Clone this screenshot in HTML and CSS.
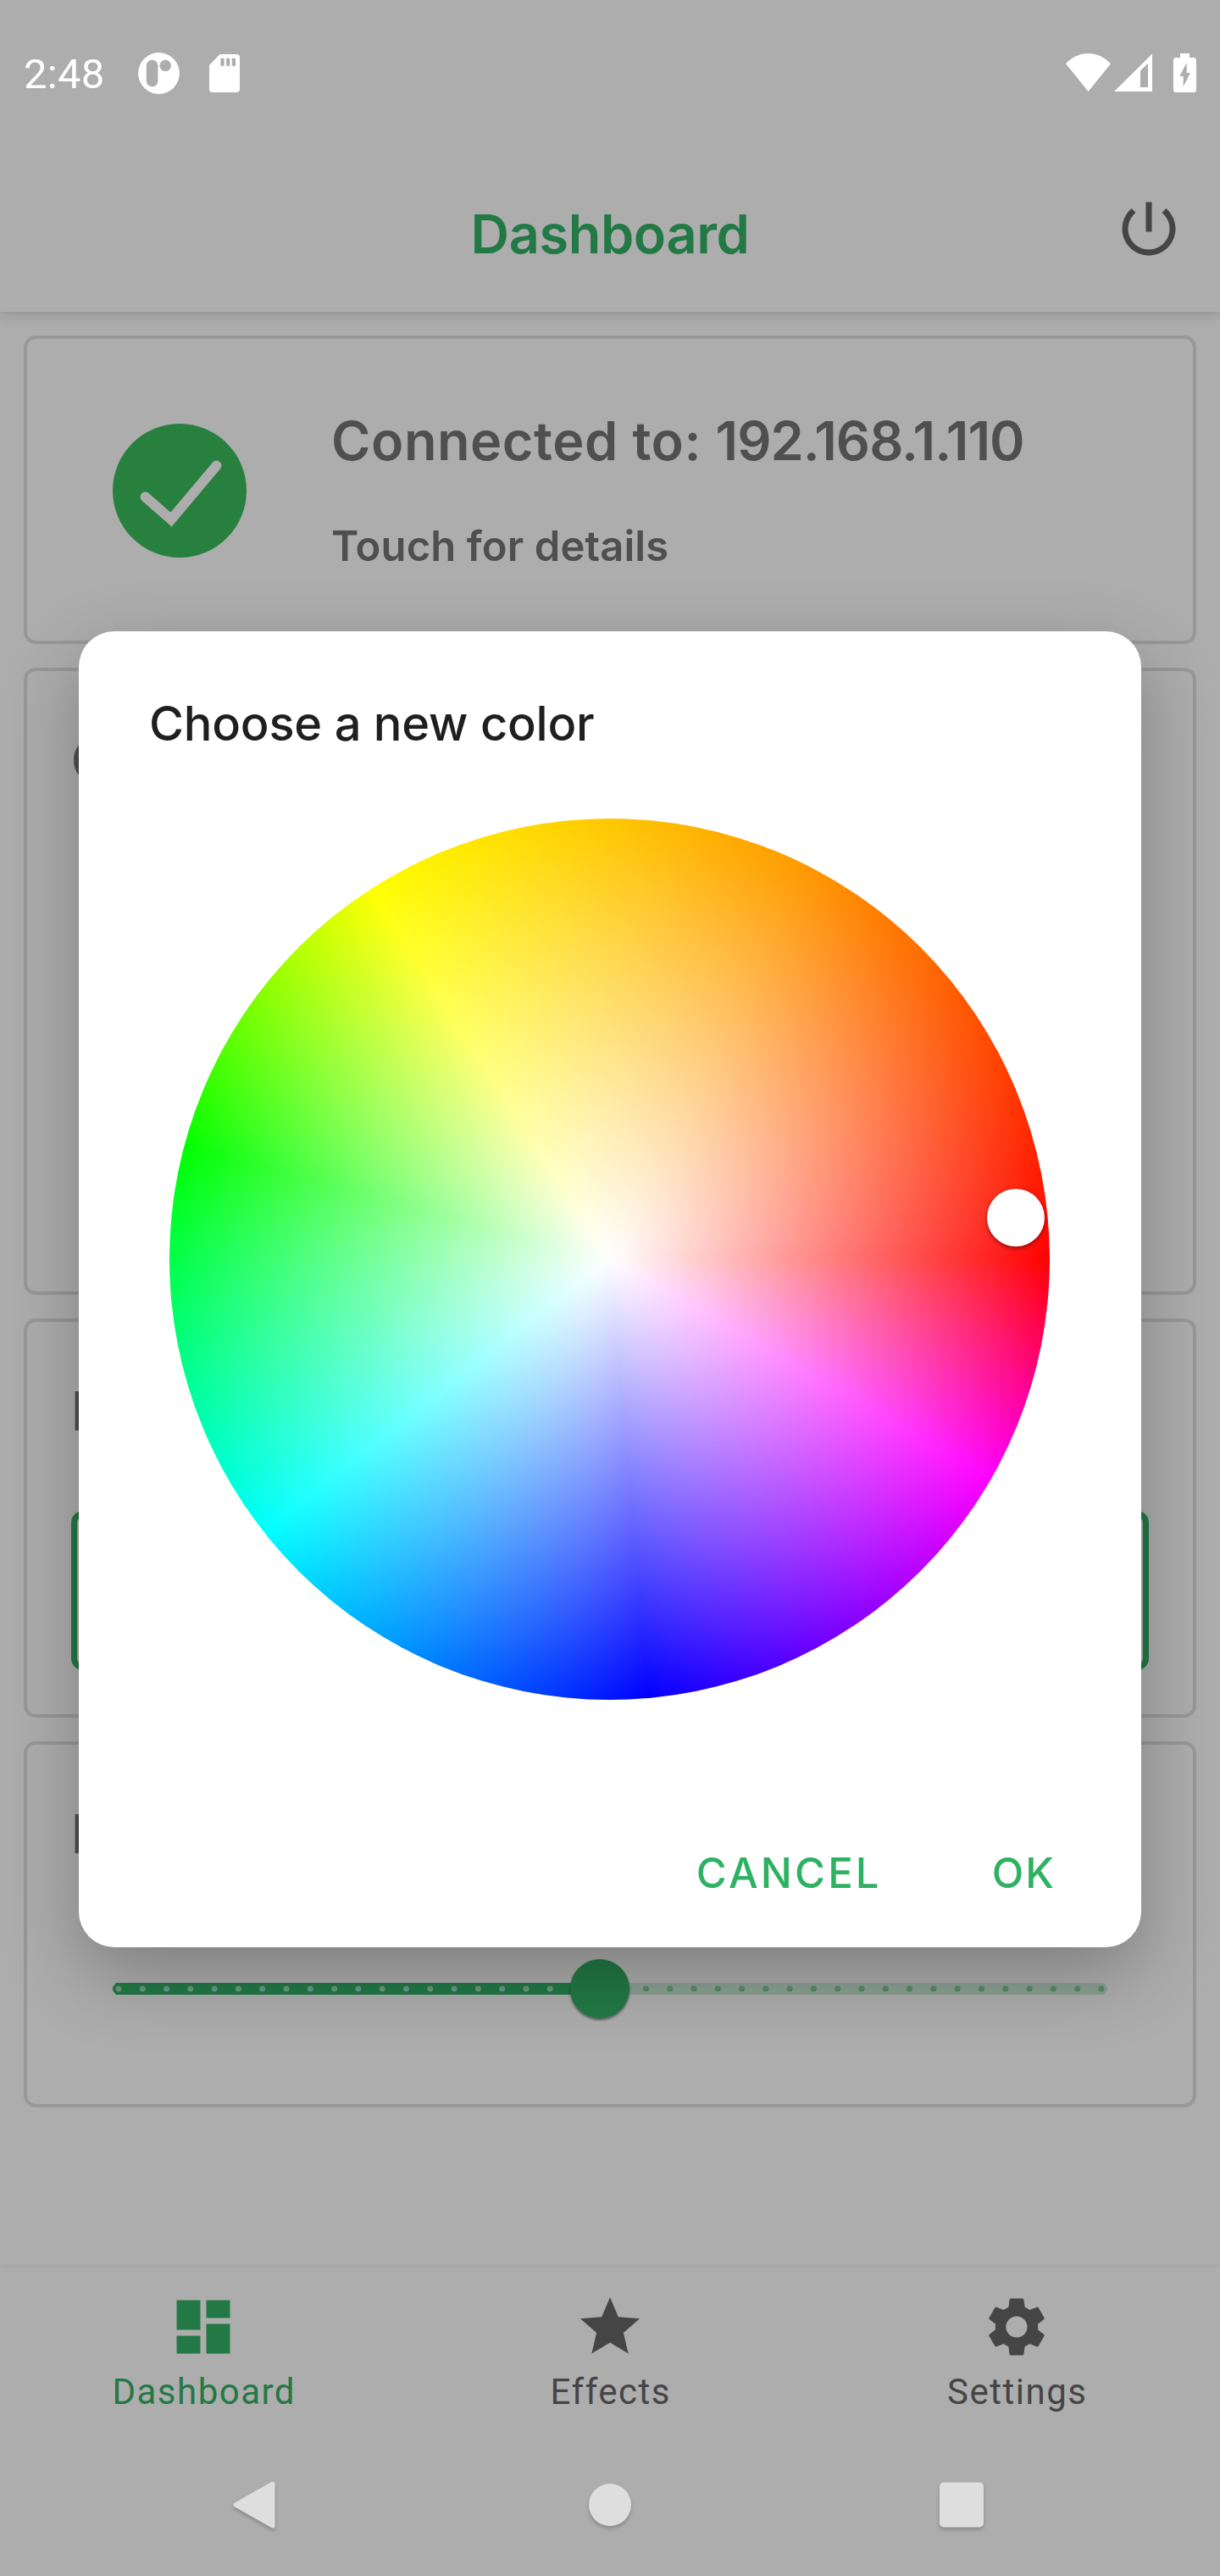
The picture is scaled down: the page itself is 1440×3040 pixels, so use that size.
FILE: index.html
```html
<!DOCTYPE html>
<html lang="en">
<head>
<meta charset="utf-8">
<title>Dashboard</title>
<link rel="stylesheet" href="styles.css">
</head>
<body>
<div class="screen">
  <header class="status">
    <span class="clock">2:48</span>
    <svg class="s-app" width="49" height="49" viewBox="0 0 49 49">
      <circle cx="24.5" cy="24.5" r="24.4" fill="#fff"/>
      <rect x="9.8" y="8.8" width="13.6" height="31.4" rx="6.6" fill="#adadad"/>
      <circle cx="32.2" cy="15.4" r="6.7" fill="#adadad"/>
    </svg>
    <svg class="s-card" width="36" height="45" viewBox="0 0 36 45">
      <path fill="#fff" fill-rule="evenodd" d="M12.5 0H32q4 0 4 4v37q0 4-4 4H4q-4 0-4-4V13zM13.4 4.8v9h4.2v-9zm6.7 0v9h4.2v-9zm6.7 0v9H31v-9z"/>
    </svg>
    <span class="spacer"></span>
    <svg class="s-wifi" width="53" height="45" viewBox="0 0 53 45">
      <path fill="#fff" d="M26.5 45L0 12.2Q11.500 0 26.500 0T53 12.2z"/>
    </svg>
    <svg class="s-cell" width="45" height="45" viewBox="0 0 45 45">
      <path fill="#fff" fill-rule="evenodd" d="M45 .5V45H0zM40 11.700l-9 8.700V40h9z"/>
    </svg>
    <svg class="s-batt" width="27" height="46" viewBox="0 0 27 46">
      <path fill="#fff" fill-rule="evenodd" d="M8 0h11v5h5q3 0 3 3v35q0 3-3 3H3q-3 0-3-3V8q0-3 3-3h5zM15.700 11L7.300 27h4.400v12.300L20 23h-4.300z"/>
    </svg>
  </header>

  <div class="appbar">
    <h1 class="title">Dashboard</h1>
    <svg class="power" width="84" height="84" viewBox="0 0 24 24" fill="#454545"><path d="M13 3h-2v10h2V3zm4.830 2.170l-1.420 1.420C17.990 7.860 19 9.810 19 12c0 3.870-3.130 7-7 7s-7-3.130-7-7c0-2.190 1.010-4.140 2.580-5.420L6.170 5.170C4.230 6.820 3 9.260 3 12c0 4.970 4.030 9 9 9s9-4.030 9-9c0-2.740-1.230-5.180-3.170-6.830z"/></svg>
  </div>

  <main class="content">
    <section class="card connection">
      <svg class="check" width="158" height="158" viewBox="0 0 158 158">
        <circle cx="79" cy="79" r="79" fill="#28803f"/>
        <path d="M38.500 86.500L69 113l53.500-63.500" fill="none" stroke="#adadad" stroke-width="11.800" stroke-linecap="round"/>
      </svg>
      <div class="conn-text">
        <h2 class="conn-title"><span class="conn-label">Connected to: </span><span class="conn-ip">192.168.1.110</span></h2>
        <p class="conn-sub">Touch for details</p>
      </div>
    </section>
    <section class="card color-card"><h2 class="heading">Color</h2></section>
    <section class="card power-card"><h2 class="heading">Power</h2><div class="outline-btn"></div></section>
    <section class="card bright-card">
      <h2 class="heading">Brightness</h2>
      <svg class="slider" width="1272" height="80" viewBox="0 0 1272 80">
        <defs><filter id="ts" x="-20%" y="-20%" width="140%" height="140%"><feDropShadow dx="0" dy="2" stdDeviation="1.500" flood-opacity=".5"/></filter></defs>
        <path d="M624 29h595l4 5v4l-4 5H624z" fill="#8ba194"/>
        <path d="M624 29H53l-4 5v4l4 5h571z" fill="#227945"/>
        <path d="M56 36H570" stroke="#6f9480" stroke-width="7" stroke-linecap="round" stroke-dasharray="0 28.290"/>
        <path d="M678.400 36H1218" stroke="#528e6a" stroke-width="7" stroke-linecap="round" stroke-dasharray="0 28.290"/>
        <circle cx="624" cy="36" r="35" fill="#227945" filter="url(#ts)"/>
      </svg>
    </section>
  </main>

  <nav class="tabs">
    <a class="tab active"><svg width="84" height="84" viewBox="0 0 24 24" fill="currentColor"><path d="M3 13h8V3H3v10zm0 8h8v-6H3v6zm10 0h8V11h-8v10zm0-18v6h8V3h-8z"/></svg><span>Dashboard</span></a>
    <a class="tab"><svg width="84" height="84" viewBox="0 0 24 24" fill="currentColor"><path d="M12 17.270L18.180 21l-1.640-7.030L22 9.240l-7.190-.61L12 2 9.190 8.630 2 9.240l5.460 4.730L5.820 21z"/></svg><span>Effects</span></a>
    <a class="tab"><svg width="84" height="84" viewBox="0 0 24 24" fill="currentColor"><path d="M19.14 12.94c.04-.3.06-.61.06-.94 0-.32-.02-.64-.07-.94l2.030-1.580c.18-.14.23-.41.12-.61l-1.920-3.320c-.12-.22-.37-.29-.59-.22l-2.390.96c-.5-.38-1.030-.7-1.620-.94l-.36-2.540c-.04-.24-.24-.41-.48-.41h-3.840c-.24 0-.43.17-.47.41l-.36 2.540c-.59.24-1.130.57-1.620.94l-2.390-.96c-.22-.08-.47 0-.59.22L2.740 8.870c-.12.21-.08.47.12.61l2.030 1.580c-.05.3-.09.63-.09.94s.02.64.07.94l-2.030 1.580c-.18.14-.23.41-.12.61l1.920 3.320c.12.22.37.29.59.22l2.390-.96c.5.38 1.030.7 1.620.94l.36 2.540c.05.24.24.41.48.41h3.840c.24 0 .44-.17.47-.41l.36-2.540c.59-.24 1.130-.56 1.620-.94l2.390.96c.22.08.47 0 .59-.22l1.920-3.320c.12-.22.07-.47-.12-.61l-2.010-1.580zM12 15.600c-1.980 0-3.600-1.620-3.600-3.600s1.620-3.600 3.600-3.600 3.600 1.620 3.600 3.600-1.620 3.600-3.600 3.600z"/></svg><span>Settings</span></a>
  </nav>

  <footer class="sysnav">
    <svg class="sys" width="84" height="84" viewBox="0 0 84 84"><path d="M20 42L64 17v50z" fill="#dedede" stroke="#dedede" stroke-width="5" stroke-linejoin="round"/></svg>
    <svg class="sys" width="84" height="84" viewBox="0 0 84 84"><circle cx="42" cy="42" r="25" fill="#dedede"/></svg>
    <svg class="sys" width="84" height="84" viewBox="0 0 84 84"><rect x="14" y="15.500" width="52" height="53" rx="5" fill="#dedede"/></svg>
  </footer>

  <div class="dialog" role="dialog">
    <h2 class="dialog-title">Choose a new color</h2>
    <div class="wheel"><span class="picker"></span></div>
    <div class="actions"><span class="cancel">CANCEL</span><span class="ok">OK</span></div>
  </div>
</div>
</body>
</html>
```
FILE: styles.css
```css
* { box-sizing: border-box; margin: 0; padding: 0; }
body { background: #adadad; }
svg { display: block; flex: none; }

.screen {
  position: relative;
  display: flex;
  flex-direction: column;
  width: 1440px;
  height: 3040px;
  overflow: hidden;
  background: #adadad;
  font-family: Inter, "Open Sans", sans-serif;
}

/* status bar */
.status {
  display: flex;
  align-items: center;
  height: 172px;
  padding: 0 28px;
  flex: none;
}
.clock { width: 135px; padding-top: 3px; font: 400 49px/56px Roboto, sans-serif; letter-spacing: .3px; color: #fff; }
.s-card { margin-left: 35px; }
.spacer { flex: 1; }
.s-wifi { margin-top: -2px; }
.s-cell { margin: -2px 0 0 4px; }
.s-batt { margin-left: 25px; }

/* app bar */
.appbar {
  display: grid;
  grid-template-columns: 84px 1fr 84px;
  height: 196px;
  flex: none;
  padding: 56px 42px 0;
  box-shadow: 0 6px 14px rgba(0, 0, 0, .11), 0 1px 3px rgba(0, 0, 0, .06);
  clip-path: inset(0 0 -40px 0);
}
.title {
  grid-column: 2;
  margin-top: 6px;
  text-align: center;
  font-size: 63px;
  font-weight: 600;
  line-height: 84px;
  letter-spacing: -.37px;
  color: #227945;
}

/* cards */
.content {
  display: flex;
  flex-direction: column;
  gap: 28px;
  flex: 1;
  padding: 28px;
}
.card { flex: none; border: 4px solid #989898; border-radius: 14px; padding: 63px 52px 0; }
.connection { display: flex; height: 364px; padding: 0 0 0 101px; }
.check { margin-top: 100px; }
.conn-text { margin-left: 100px; padding-top: 80px; color: #4f4f4f; white-space: nowrap; }
.conn-title { font-size: 63px; font-weight: 600; line-height: 80px; }
.conn-label { letter-spacing: .55px; }
.conn-ip { letter-spacing: -1px; }
.conn-sub { margin-top: 55px; font-size: 49px; font-weight: 600; line-height: 60px; letter-spacing: .1px; }
.color-card { height: 740px; }
.power-card { height: 471px; }
.bright-card { height: 432px; }
.heading { font-size: 63px; font-weight: 600; line-height: 84px; color: #4f4f4f; }
.outline-btn { height: 188px; margin-top: 76px; border: 7px solid #227945; border-radius: 14px; }
.slider { margin-top: 105px; overflow: visible; }

/* bottom tabs */
.tabs {
  display: grid;
  grid-template-columns: repeat(3, 1fr);
  height: 196px;
  flex: none;
  box-shadow: 0 -2px 4px rgba(0, 0, 0, .05);
}
.tab {
  display: flex;
  flex-direction: column;
  align-items: center;
  gap: 11px;
  padding-top: 28px;
  font: 400 42px/48px Roboto, sans-serif;
  letter-spacing: 1.500px;
  color: #454545;
}
.tab span { margin-left: 1.500px; }
.tab.active { color: #227945; }

/* system navigation */
.sysnav { display: flex; align-items: center; height: 168px; flex: none; padding-left: 258px; gap: 336px; }
.sys { filter: drop-shadow(0 3px 2px rgba(0, 0, 0, .2)); }
.sys:last-child { margin-left: -3px; }

/* dialog */
.dialog {
  position: absolute;
  left: 93px;
  top: 745px;
  display: flex;
  flex-direction: column;
  width: 1254px;
  height: 1553px;
  padding: 74px 101px 57px 83px;
  border-radius: 42px;
  background: #fff;
  box-shadow: 0 32px 88px rgba(0, 0, 0, .27);
}
.dialog-title { font-size: 56px; font-weight: 500; line-height: 70px; letter-spacing: -.25px; color: #1f1f1f; }
.wheel {
  position: relative;
  width: 1039px;
  height: 1040px;
  margin: 77px 0 0 24px;
  border-radius: 50%;
  background:
    radial-gradient(circle closest-side, #fff, rgba(255, 255, 255, 0)),
    conic-gradient(from 90deg,
      #f00 0deg, #f0f 30deg, #00f 85deg, #0ff 141.700deg, #0f0 194.800deg, #ff0 237.200deg,
      rgb(255, 199, 0) 270deg, rgb(255, 152, 0) 297deg, rgb(255, 118, 0) 311deg, rgb(255, 76, 0) 329deg, #f00 360deg);
}
.picker {
  position: absolute;
  left: 965px;
  top: 437px;
  width: 68px;
  height: 68px;
  border-radius: 50%;
  background: #fff;
  box-shadow: 0 2px 5px rgba(0, 0, 0, .45);
}
.actions {
  display: flex;
  justify-content: flex-end;
  gap: 130px;
  margin-top: auto;
  font-size: 49px;
  font-weight: 500;
  line-height: 60px;
  color: #2fb163;
}
.cancel { letter-spacing: 3.170px; }
.ok { letter-spacing: 2px; }
```
